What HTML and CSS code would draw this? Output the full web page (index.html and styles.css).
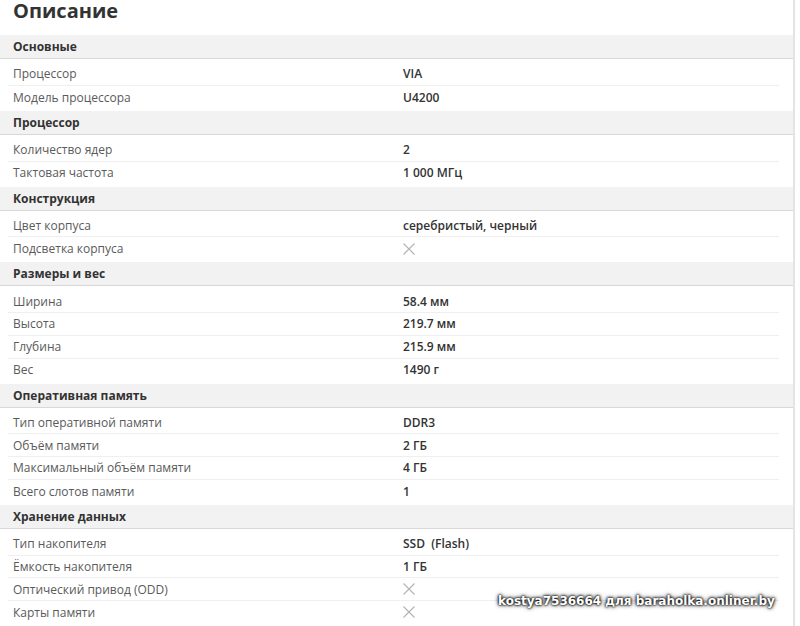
FILE: index.html
```html
<!DOCTYPE html>
<html lang="ru">
<head>
<meta charset="utf-8">
<link rel="stylesheet" href="styles.css">
</head>
<body>
<div class="page">
  <h1 class="title">Описание</h1>

  <div class="section">
    <div class="sec-head">Основные</div>
    <div class="rows">
      <div class="row"><span class="label">Процессор</span><span class="value">VIA</span></div>
      <div class="row"><span class="label">Модель процессора</span><span class="value">U4200</span></div>
    </div>
  </div>

  <div class="section">
    <div class="sec-head">Процессор</div>
    <div class="rows">
      <div class="row"><span class="label">Количество ядер</span><span class="value">2</span></div>
      <div class="row"><span class="label">Тактовая частота</span><span class="value">1 000 МГц</span></div>
    </div>
  </div>

  <div class="section">
    <div class="sec-head">Конструкция</div>
    <div class="rows">
      <div class="row"><span class="label">Цвет корпуса</span><span class="value">серебристый, черный</span></div>
      <div class="row"><span class="label">Подсветка корпуса</span><span class="value"><svg class="no" viewBox="0 0 12 12" width="12" height="12"><path d="M0.5 0.5L11.5 11.5M11.5 0.5L0.5 11.5" stroke="#b3b3b3" stroke-width="1.1" fill="none"/></svg></span></div>
    </div>
  </div>

  <div class="section">
    <div class="sec-head">Размеры и вес</div>
    <div class="rows">
      <div class="row"><span class="label">Ширина</span><span class="value">58.4 мм</span></div>
      <div class="row"><span class="label">Высота</span><span class="value">219.7 мм</span></div>
      <div class="row"><span class="label">Глубина</span><span class="value">215.9 мм</span></div>
      <div class="row"><span class="label">Вес</span><span class="value">1490 г</span></div>
    </div>
  </div>

  <div class="section">
    <div class="sec-head">Оперативная память</div>
    <div class="rows">
      <div class="row"><span class="label">Тип оперативной памяти</span><span class="value">DDR3</span></div>
      <div class="row"><span class="label">Объём памяти</span><span class="value">2 ГБ</span></div>
      <div class="row"><span class="label">Максимальный объём памяти</span><span class="value">4 ГБ</span></div>
      <div class="row"><span class="label">Всего слотов памяти</span><span class="value">1</span></div>
    </div>
  </div>

  <div class="section">
    <div class="sec-head">Хранение данных</div>
    <div class="rows">
      <div class="row"><span class="label">Тип накопителя</span><span class="value">SSD&nbsp; (Flash)</span></div>
      <div class="row"><span class="label">Ёмкость накопителя</span><span class="value">1 ГБ</span></div>
      <div class="row"><span class="label">Оптический привод (ODD)</span><span class="value"><svg class="no" viewBox="0 0 12 12" width="12" height="12"><path d="M0.5 0.5L11.5 11.5M11.5 0.5L0.5 11.5" stroke="#b3b3b3" stroke-width="1.1" fill="none"/></svg></span></div>
      <div class="row"><span class="label">Карты памяти</span><span class="value"><svg class="no" viewBox="0 0 12 12" width="12" height="12"><path d="M0.5 0.5L11.5 11.5M11.5 0.5L0.5 11.5" stroke="#b3b3b3" stroke-width="1.1" fill="none"/></svg></span></div>
    </div>
  </div>
</div>
<div class="watermark">kostya7536664 для baraholka.onliner.by</div>
</body>
</html>
```
FILE: styles.css
```css
html, body {
  margin: 0;
  padding: 0;
  background: #fff;
  height: 626px;
  overflow: hidden;
}
body {
  font-family: "Open Sans", "Liberation Sans", sans-serif;
  font-size: 12px;
  color: #333;
  position: relative;
}
.page {
  width: 793px;
  height: 626px;
  border-right: 2px solid #e4e4e4;
  box-sizing: content-box;
}
.title {
  margin: 0 0 13px 0;
  padding-left: 13px;
  font-size: 20px;
  line-height: 22px;
  font-weight: 700;
  color: #333;
}
.sec-head {
  height: 23px;
  line-height: 23px;
  background: #f2f2f2;
  border-bottom: 1px solid #d8d8d8;
  padding-left: 13px;
  font-weight: 700;
  color: #333;
}
.rows {
  padding: 4px 0 2.25px;
}
.row {
  box-sizing: border-box;
  height: 22.75px;
  margin: 0 14px 0 8px;
  padding: 0 0 0 5px;
  display: grid;
  grid-template-columns: 390px 1fr;
  align-items: center;
  border-bottom: 1px solid #efefef;
}
.row:last-child {
  border-bottom: 0;
}
.label {
  color: #5a5a5a;
}
.value {
  color: #333;
  font-weight: 600;
  display: flex;
  align-items: center;
}
.no {
  display: block;
}
.watermark {
  position: absolute;
  left: 498px;
  top: 593px;
  font-family: "DejaVu Sans", sans-serif;
  font-weight: 700;
  font-size: 12px;
  line-height: 16px;
  color: #fff;
  text-shadow: 0 0 2px #000, 0 0 3px #000, 0 0 5px #222;
  white-space: nowrap;
}
```
